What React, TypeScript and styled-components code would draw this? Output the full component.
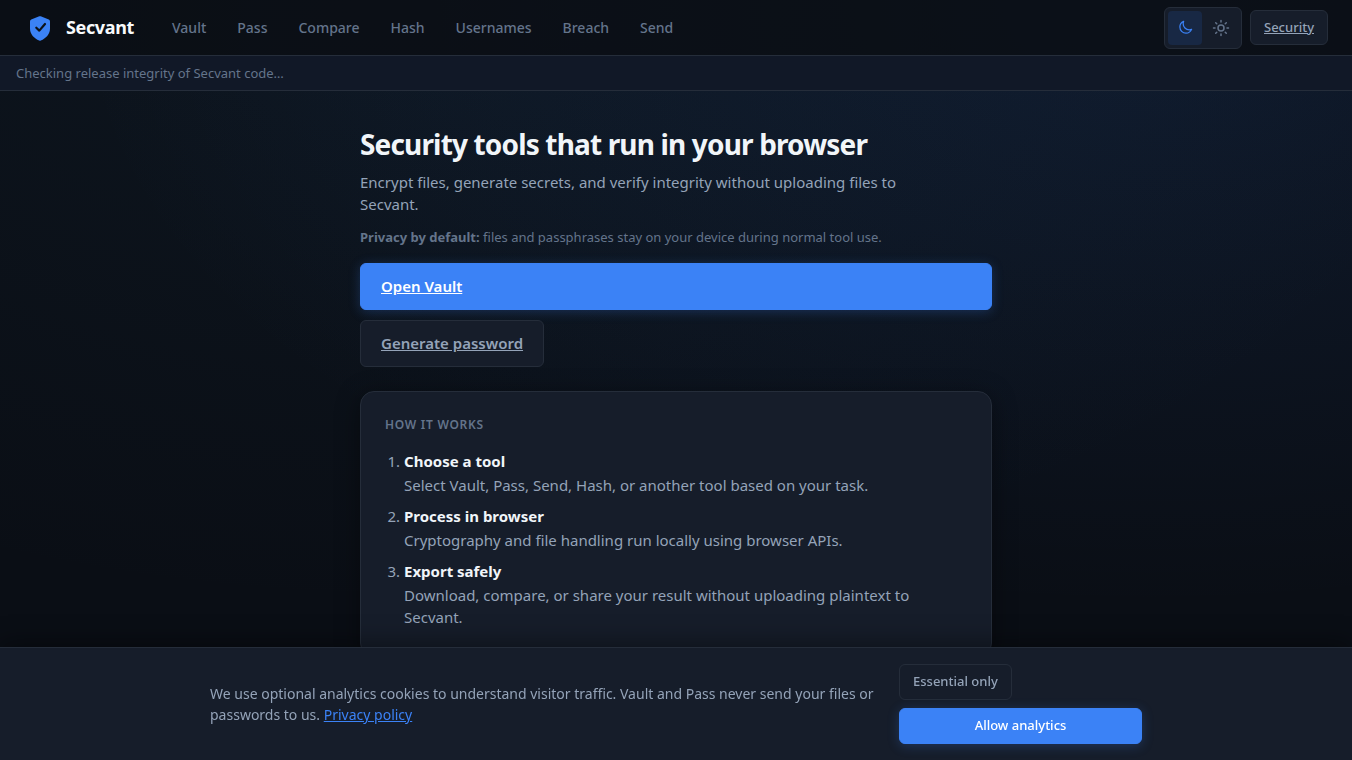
import React, { useState } from "react";
import styled, { createGlobalStyle } from "styled-components";

const GlobalStyle = createGlobalStyle`
  *, *::before, *::after { box-sizing: border-box; }
  html { background: #0a0e15; scrollbar-width: none; }
  body {
    margin: 0;
    min-height: 100vh;
    color: #f1f5f9;
    font-family: "Noto Sans", sans-serif;
    font-size: 15px;
    line-height: 22px;
    background:
      radial-gradient(ellipse 80% 80% at 85% 0%, rgba(59, 130, 246, 0.11), transparent 100%),
      radial-gradient(ellipse 80% 80% at 30% 0%, rgba(50, 110, 150, 0.08), transparent 100%),
      #0a0e15;
    background-attachment: fixed;
  }
  h1, h2, p, ol { margin: 0; }
  button { font-family: inherit; cursor: pointer; }
`;

const Header = styled.header`
  display: flex;
  align-items: center;
  justify-content: space-between;
  height: 56px;
  padding: 0 24px;
  border-bottom: 1px solid #252d3a;
  background: rgba(10, 14, 20, 0.85);
`;

const HeaderGroup = styled.div`
  display: flex;
  align-items: center;
  gap: 8px;
`;

const Brand = styled.a`
  display: flex;
  align-items: center;
  gap: 10px;
  margin-right: 16px;
  color: #f8fafc;
  font-size: 18px;
  font-weight: 700;
  letter-spacing: -0.02em;
  line-height: 21px;
  text-decoration: none;
`;

const Nav = styled.nav`
  display: flex;
  gap: 3px;
`;

const NavLink = styled.a`
  padding: 6px 14px;
  color: #64748b;
  font-size: 14px;
  font-weight: 500;
  line-height: 20px;
  text-decoration: none;
`;

const ThemeToggle = styled.div`
  display: flex;
  gap: 2px;
  padding: 3px;
  border: 1px solid #252d3a;
  border-radius: 6px;
  background: #161d2a;
`;

const ThemeButton = styled.button<{ $active: boolean }>`
  display: flex;
  align-items: center;
  justify-content: center;
  width: 34px;
  height: 34px;
  padding: 0;
  border: 0;
  border-radius: 4px;
  color: ${(p) => (p.$active ? "#3b82f6" : "#64748b")};
  background: ${(p) => (p.$active ? "#182844" : "transparent")};
`;

const SecurityLink = styled.a`
  padding: 6px 13px;
  border: 1px solid #252d3a;
  border-radius: 6px;
  background: #161d2a;
  color: #94a3b8;
  font-size: 13px;
  font-weight: 500;
  line-height: 21px;
`;

const StatusBar = styled.div`
  padding: 7px 16px;
  border-bottom: 1px solid #252d3a;
  background: #111827;
  color: #64748b;
  font-size: 13px;
  line-height: 20px;
`;

const Main = styled.main`
  max-width: 680px;
  margin: 0 auto;
  padding: 36px 24px 160px;
`;

const Title = styled.h1`
  margin-bottom: 9px;
  color: #f1f5f9;
  font-size: 28px;
  font-weight: 700;
  letter-spacing: -0.03em;
  line-height: 35px;
`;

const Lead = styled.p`
  max-width: 560px;
  margin-bottom: 12px;
  color: #94a3b8;
`;

const PrivacyNote = styled.p`
  margin-bottom: 16px;
  color: #64748b;
  font-size: 13px;
  line-height: 20px;
`;

const Actions = styled.div`
  display: flex;
  flex-direction: column;
  gap: 10px;
  margin-bottom: 24px;
`;

const ActionLink = styled.a<{ $primary?: boolean }>`
  align-self: ${(p) => (p.$primary ? "stretch" : "flex-start")};
  padding: 12px 20px;
  border: 1px solid ${(p) => (p.$primary ? "#3b82f6" : "#252d3a")};
  border-radius: 6px;
  background: ${(p) => (p.$primary ? "#3b82f6" : "#161d2a")};
  box-shadow: ${(p) => (p.$primary ? "0 2px 12px rgba(59, 130, 246, 0.25)" : "none")};
  color: ${(p) => (p.$primary ? "#ffffff" : "#94a3b8")};
  font-weight: 600;
  line-height: 21px;
`;

const Card = styled.section`
  padding: 24px 24px 28px;
  border: 1px solid #252d3a;
  border-radius: 14px;
  background: #161d2a;
  box-shadow: 0 4px 24px rgba(0, 0, 0, 0.4);
`;

const CardTitle = styled.h2`
  margin-bottom: 16px;
  color: #64748b;
  font-size: 12px;
  font-weight: 600;
  letter-spacing: 0.06em;
  line-height: 18px;
  text-transform: uppercase;
`;

const Steps = styled.ol`
  display: flex;
  flex-direction: column;
  gap: 9px;
  padding-left: 19px;
  color: #94a3b8;
`;

const StepTitle = styled.strong`
  color: #f1f5f9;
  font-weight: 700;
  line-height: 23px;
`;

const StepText = styled.p`
  margin-top: 1px;
`;

const ConsentBar = styled.aside`
  position: fixed;
  right: 0;
  bottom: 0;
  left: 0;
  padding: 16px 24px;
  border-top: 1px solid #252d3a;
  background: #161d2a;
  box-shadow: 0 -4px 24px rgba(0, 0, 0, 0.4);
`;

const ConsentInner = styled.div`
  display: flex;
  align-items: center;
  justify-content: space-between;
  gap: 24px;
  max-width: 932px;
  margin: 0 auto;
`;

const ConsentText = styled.p`
  flex: 1;
  color: #94a3b8;
  font-size: 14px;
  line-height: 21px;

  a { color: #3b82f6; }
`;

const ConsentActions = styled.div`
  display: flex;
  flex-direction: column;
  gap: 8px;
  width: 243px;
`;

const ConsentButton = styled.button<{ $primary?: boolean }>`
  align-self: ${(p) => (p.$primary ? "stretch" : "flex-start")};
  height: 36px;
  padding: 0 13px 2px;
  border: 1px solid ${(p) => (p.$primary ? "#3b82f6" : "#252d3a")};
  border-radius: 6px;
  background: ${(p) => (p.$primary ? "#3b82f6" : "transparent")};
  box-shadow: ${(p) => (p.$primary ? "0 2px 12px rgba(59, 130, 246, 0.25)" : "none")};
  color: ${(p) => (p.$primary ? "#ffffff" : "#94a3b8")};
  font-size: 13px;
  font-weight: 500;
  line-height: 19px;
`;

const ShieldIcon = () => (
  <svg width="32" height="32" viewBox="0 0 32 32" aria-hidden="true">
    <path
      d="M15.300 4.300Q16 4 16.700 4.300L24.800 7.600Q26 8.100 26 9.400V16.500C26 22.500 21.800 26.300 16.800 28.600Q16 29 15.200 28.600C10.200 26.300 6 22.500 6 16.500V9.400Q6 8.100 7.200 7.600Z"
      fill="#3b82f6"
    />
    <path
      d="m12.300 15.700 3 2.900 5.700-6.600"
      fill="none"
      stroke="#0d1219"
      strokeWidth="2.200"
      strokeLinecap="round"
      strokeLinejoin="round"
    />
  </svg>
);

const strokeProps = {
  viewBox: "0 0 24 24",
  fill: "none",
  stroke: "currentColor",
  strokeWidth: 2,
  strokeLinecap: "round" as const,
  strokeLinejoin: "round" as const,
  "aria-hidden": true,
};

const MoonIcon = () => (
  <svg width="15" height="15" {...strokeProps}>
    <path d="M21.752 15.002A9.720 9.720 0 0 1 18 15.750c-5.385 0-9.750-4.365-9.750-9.750 0-1.330.266-2.597.748-3.752A9.753 9.753 0 0 0 3 11.250C3 16.635 7.365 21 12.750 21a9.753 9.753 0 0 0 9.002-5.998Z" />
  </svg>
);

const SunIcon = () => (
  <svg width="18" height="18" {...strokeProps}>
    <circle cx="12" cy="12" r="4" />
    <path d="M12 2v2M12 20v2M4.930 4.930l1.410 1.410M17.660 17.660l1.410 1.410M2 12h2M20 12h2M6.340 17.660l-1.410 1.410M19.070 4.930l-1.410 1.410" />
  </svg>
);

const tools = ["Vault", "Pass", "Compare", "Hash", "Usernames", "Breach", "Send"];

const steps = [
  { title: "Choose a tool", text: "Select Vault, Pass, Send, Hash, or another tool based on your task." },
  { title: "Process in browser", text: "Cryptography and file handling run locally using browser APIs." },
  { title: "Export safely", text: "Download, compare, or share your result without uploading plaintext to Secvant." },
];

export default function App() {
  const [theme, setTheme] = useState<"dark" | "light">("dark");

  return (
    <>
      <GlobalStyle />
      <Header>
        <HeaderGroup>
          <Brand href="#home">
            <ShieldIcon />
            Secvant
          </Brand>
          <Nav aria-label="Tools">
            {tools.map((tool) => (
              <NavLink key={tool} href={`#${tool.toLowerCase()}`}>
                {tool}
              </NavLink>
            ))}
          </Nav>
        </HeaderGroup>
        <HeaderGroup>
          <ThemeToggle role="group" aria-label="Theme">
            <ThemeButton
              type="button"
              aria-label="Dark theme"
              aria-pressed={theme === "dark"}
              $active={theme === "dark"}
              onClick={() => setTheme("dark")}
            >
              <MoonIcon />
            </ThemeButton>
            <ThemeButton
              type="button"
              aria-label="Light theme"
              aria-pressed={theme === "light"}
              $active={theme === "light"}
              onClick={() => setTheme("light")}
            >
              <SunIcon />
            </ThemeButton>
          </ThemeToggle>
          <SecurityLink href="#security">Security</SecurityLink>
        </HeaderGroup>
      </Header>
      <StatusBar role="status">Checking release integrity of Secvant code…</StatusBar>
      <Main>
        <Title>Security tools that run in your browser</Title>
        <Lead>
          Encrypt files, generate secrets, and verify integrity without uploading files to Secvant.
        </Lead>
        <PrivacyNote>
          <strong>Privacy by default:</strong> files and passphrases stay on your device during normal
          tool use.
        </PrivacyNote>
        <Actions>
          <ActionLink href="#vault" $primary>
            Open Vault
          </ActionLink>
          <ActionLink href="#pass">Generate password</ActionLink>
        </Actions>
        <Card>
          <CardTitle>How it works</CardTitle>
          <Steps>
            {steps.map((step) => (
              <li key={step.title}>
                <StepTitle>{step.title}</StepTitle>
                <StepText>{step.text}</StepText>
              </li>
            ))}
          </Steps>
        </Card>
      </Main>
      <ConsentBar aria-label="Cookie consent">
        <ConsentInner>
          <ConsentText>
            We use optional analytics cookies to understand visitor traffic. Vault and Pass never send
            your files or passwords to us. <a href="#privacy">Privacy policy</a>
          </ConsentText>
          <ConsentActions>
            <ConsentButton type="button">Essential only</ConsentButton>
            <ConsentButton type="button" $primary>
              Allow analytics
            </ConsentButton>
          </ConsentActions>
        </ConsentInner>
      </ConsentBar>
    </>
  );
}
